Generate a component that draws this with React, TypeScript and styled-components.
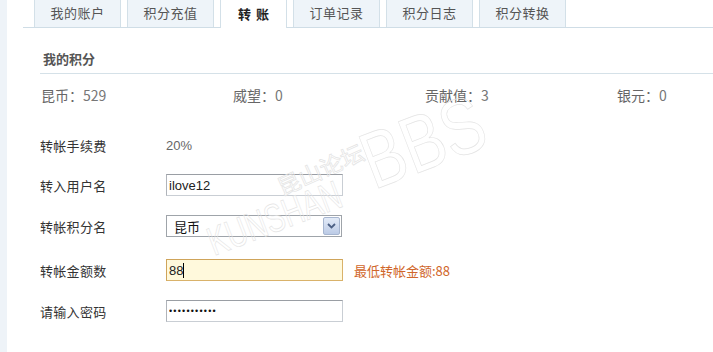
import React from 'react';
import styled, { createGlobalStyle } from 'styled-components';

const GlobalStyle = createGlobalStyle`
  html, body {
    margin: 0;
    padding: 0;
    background: #ffffff;
  }
  body {
    font-family: "Noto Sans CJK SC", "Liberation Sans", sans-serif;
    font-size: 12px;
    color: #333;
  }
`;

const Page = styled.div`
  display: flex;
  width: 713px;
  height: 352px;
  overflow: hidden;
  position: relative;
`;

const SideStrip = styled.div`
  width: 7px;
  flex-shrink: 0;
  background: #eef3f8;
`;

const Main = styled.div`
  flex: 1;
  display: flex;
  flex-direction: column;
`;

const TabBar = styled.div`
  display: flex;
  gap: 6px;
  height: 28px;
  margin-left: 16px;
  padding-left: 11px;
  border-bottom: 1px solid #cfdde6;
  box-sizing: border-box;
`;

const Tab = styled.div<{ $active?: boolean }>`
  width: ${p => (p.$active ? 67 : 87)}px;
  height: ${p => (p.$active ? 28 : 27)}px;
  box-sizing: border-box;
  display: flex;
  align-items: center;
  justify-content: center;
  border: 1px solid #d3e0e8;
  border-top: none;
  border-bottom: none;
  background: ${p => (p.$active ? '#ffffff' : '#eef4f9')};
  color: ${p => (p.$active ? '#222' : '#555')};
  font-weight: ${p => (p.$active ? 700 : 400)};
  font-size: 13px;
  letter-spacing: ${p => (p.$active ? '5px' : '0.5px')};
  padding-left: ${p => (p.$active ? '5px' : '0')};
  padding-bottom: 2px;
`;

const Section = styled.div`
  margin-left: 33px;
`;

const SectionTitle = styled.div`
  height: 30px;
  margin-top: 15px;
  padding-left: 3px;
  display: flex;
  align-items: center;
  font-size: 13px;
  font-weight: 700;
  color: #555;
  border-bottom: 1px solid #d5e1e8;
`;

const StatsRow = styled.div`
  display: grid;
  grid-template-columns: repeat(4, 192px);
  height: 42px;
  align-items: center;
  padding-left: 1px;
`;

const Stat = styled.div`
  font-size: 14px;
  color: #666;
`;

const StatValue = styled.span`
  color: #777;
`;

const Form = styled.div`
  display: flex;
  flex-direction: column;
  padding-top: 9px;
`;

const FormRow = styled.div<{ $h: number }>`
  display: flex;
  align-items: center;
  height: ${p => p.$h}px;
`;

const Label = styled.div`
  width: 126px;
  font-size: 13px;
  color: #333;
  letter-spacing: 0.3px;
`;

const PlainValue = styled.div`
  font-size: 13px;
  color: #666;
  font-family: "Liberation Sans", sans-serif;
`;

const TextInput = styled.input<{ $warn?: boolean }>`
  width: 177px;
  height: 22px;
  box-sizing: border-box;
  padding: 0 2px;
  font-family: "Liberation Sans", "Noto Sans CJK SC", sans-serif;
  font-size: 13px;
  color: #222;
  outline: none;
  border: 1px solid ${p => (p.$warn ? '#d9b26a' : '#c9ced4')};
  border-top-color: ${p => (p.$warn ? '#cfa45a' : '#9a9ea4')};
  border-left-color: ${p => (p.$warn ? '#cfa45a' : '#b0b4ba')};
  background: ${p => (p.$warn ? '#fff9dc' : '#ffffff')};
  &[type='password'] {
    font-size: 9px;
    letter-spacing: 1.2px;
    color: #111;
  }
`;

const FieldWrap = styled.div`
  position: relative;
  display: flex;
  align-items: center;
`;

const Caret = styled.span`
  position: absolute;
  left: 17px;
  top: 4px;
  width: 1px;
  height: 15px;
  background: #000;
`;

const SelectBox = styled.div`
  width: 176px;
  height: 22px;
  box-sizing: border-box;
  border: 1px solid #9fa4aa;
  display: flex;
  align-items: center;
  justify-content: space-between;
  padding: 0 1px 0 7px;
  font-size: 13px;
  color: #111;
  background: #fff;
`;

const ArrowButton = styled.span`
  width: 17px;
  height: 18px;
  box-sizing: border-box;
  border: 1px solid #a7b6d0;
  border-radius: 2px;
  background: linear-gradient(#e3ebf8, #bccbe6);
  display: flex;
  align-items: center;
  justify-content: center;
`;

const Hint = styled.span`
  margin-left: 11px;
  font-size: 13px;
  color: #d0662a;
`;

const Watermark = styled.svg`
  position: absolute;
  left: 0;
  top: 0;
  pointer-events: none;
`;

const stats = [
  { name: '昆币', value: '529' },
  { name: '威望', value: '0' },
  { name: '贡献值', value: '3' },
  { name: '银元', value: '0' },
];

const tabs = ['我的账户', '积分充值', '转账', '订单记录', '积分日志', '积分转换'];

export default function App() {
  return (
    <>
      <GlobalStyle />
      <Page>
        <SideStrip />
        <Main>
          <TabBar>
            {tabs.map((t, i) => (
              <Tab key={t} $active={i === 2}>
                {t}
              </Tab>
            ))}
          </TabBar>

          <Section>
            <SectionTitle>我的积分</SectionTitle>
            <StatsRow>
              {stats.map(s => (
                <Stat key={s.name}>
                  {s.name}：<StatValue>{s.value}</StatValue>
                </Stat>
              ))}
            </StatsRow>
          </Section>

          <Section>
            <Form>
              <FormRow $h={40}>
                <Label>转帐手续费</Label>
                <PlainValue>20%</PlainValue>
              </FormRow>
              <FormRow $h={40}>
                <Label>转入用户名</Label>
                <TextInput defaultValue="ilove12" />
              </FormRow>
              <FormRow $h={42}>
                <Label>转帐积分名</Label>
                <SelectBox>
                  <span>昆币</span>
                  <ArrowButton>
                    <svg width="9" height="6" viewBox="0 0 9 6">
                      <path d="M1 1 L4.5 4.5 L8 1" fill="none" stroke="#4d6185" strokeWidth="1.8" />
                    </svg>
                  </ArrowButton>
                </SelectBox>
              </FormRow>
              <FormRow $h={46}>
                <Label>转帐金额数</Label>
                <FieldWrap>
                  <TextInput $warn defaultValue="88" />
                  <Caret />
                </FieldWrap>
                <Hint>最低转帐金额:88</Hint>
              </FormRow>
              <FormRow $h={36}>
                <Label>请输入密码</Label>
                <TextInput type="password" defaultValue="12345678901" />
              </FormRow>
            </Form>
          </Section>
        </Main>

        <Watermark width="713" height="352" viewBox="0 0 713 352">
          <g fill="none" stroke="#e4e4e4" strokeWidth="0.7">
            <text
              x="282"
              y="196"
              fontSize="22"
              fontFamily="Noto Sans CJK SC, sans-serif"
              textLength="92"
              lengthAdjust="spacingAndGlyphs"
              transform="rotate(-24 282 196)"
            >
              昆山论坛
            </text>
            <text
              x="214"
              y="256"
              fontSize="40"
              fontFamily="Liberation Sans, sans-serif"
              textLength="140"
              lengthAdjust="spacingAndGlyphs"
              transform="rotate(-21 214 256)"
            >
              KUNSHAN
            </text>
            <text
              x="374"
              y="190"
              fontSize="80"
              fontFamily="Liberation Sans, sans-serif"
              textLength="126"
              lengthAdjust="spacingAndGlyphs"
              transform="rotate(-21 374 190)"
            >
              BBS
            </text>
          </g>
        </Watermark>
      </Page>
    </>
  );
}
